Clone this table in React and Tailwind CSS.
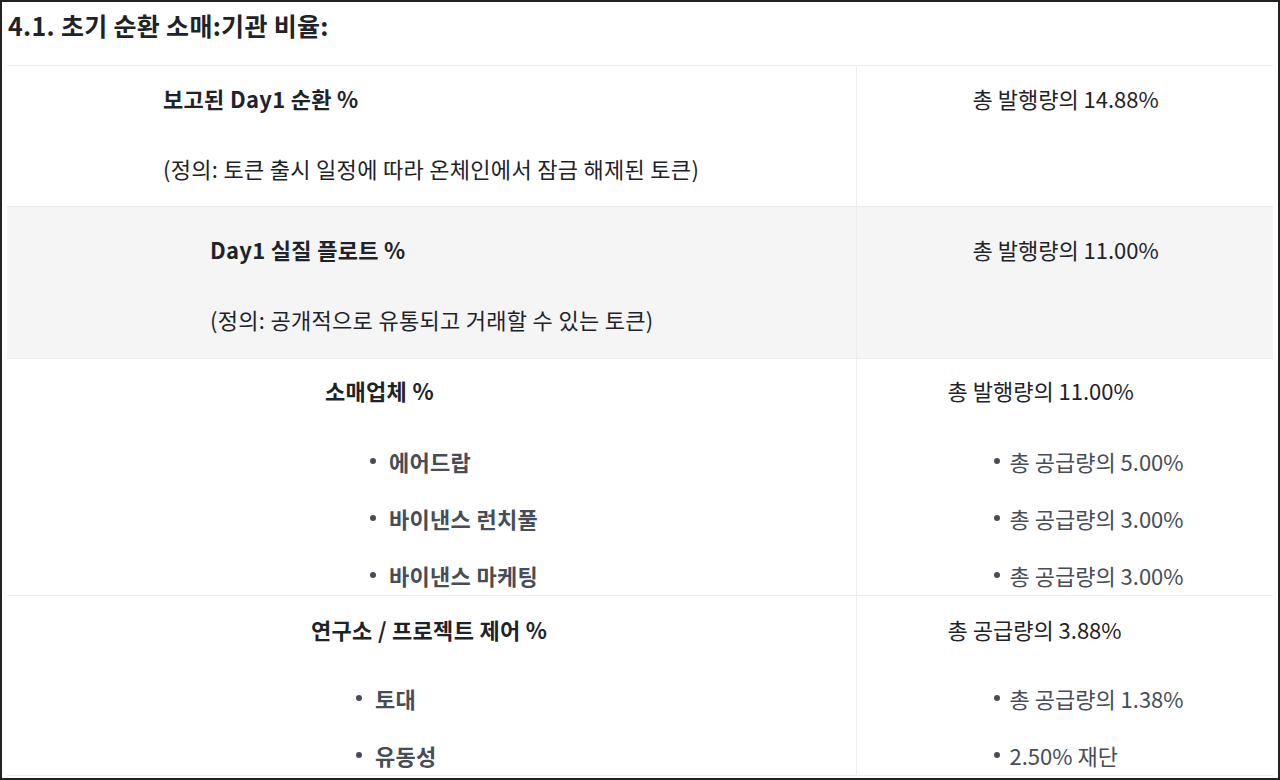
const font = { fontFamily: '"Noto Sans CJK KR", "Noto Sans", sans-serif' };

function Dot() {
  return <span className="inline-block w-[6px] h-[6px] rounded-full bg-[#474d57]" />;
}

function Bullet({ children, bold, gap = "gap-[13px]" }) {
  return (
    <li className={`flex items-center ${gap} h-[28px]`}>
      <Dot />
      <span className={bold ? "font-bold text-[#474d57]" : "text-[#474d57]"}>{children}</span>
    </li>
  );
}

export default function App() {
  return (
    <div
      style={font}
      className="h-[780px] w-[1280px] overflow-hidden border-2 border-[#222] bg-white text-[#1e2329]"
    >
      {/* TITLE */}
      <h2 className="pt-[8px] pl-[6px] text-[25px] leading-[30px] tracking-[0.3px] font-bold text-[#1e2329]">
        4.1. 초기 순환 소매:기관 비율:
      </h2>

      {/* TABLE */}
      <table className="mt-[25px] ml-[5px] w-[1266px] table-fixed border-collapse text-[22px] leading-[28px]">
        <colgroup>
          <col className="w-[849px]" />
          <col className="w-[417px]" />
        </colgroup>
        <tbody>
          <tr className="h-[141px] border-t border-[#eaecef]">
            <td className="align-top border-r border-[#eaecef] pl-[156px] pt-[18px] tracking-[0.3px]">
              <p className="font-bold">보고된 Day1 순환 %</p>
              <p className="mt-[42px]">(정의: 토큰 출시 일정에 따라 온체인에서 잠금 해제된 토큰)</p>
            </td>
            <td className="align-top pl-[116px] pt-[18px]">
              <p>총 발행량의 14.88%</p>
            </td>
          </tr>

          <tr className="h-[152px] bg-[#f5f5f5] border-t border-[#eaecef]">
            <td className="align-top border-r border-[#eaecef] pl-[203px] pt-[28px] tracking-[0.3px]">
              <p className="font-bold">Day1 실질 플로트 %</p>
              <p className="mt-[42px]">(정의: 공개적으로 유통되고 거래할 수 있는 토큰)</p>
            </td>
            <td className="align-top pl-[116px] pt-[28px]">
              <p>총 발행량의 11.00%</p>
            </td>
          </tr>

          <tr className="h-[237px] border-t border-[#eaecef]">
            <td className="align-top border-r border-[#eaecef] pl-[318px] pt-[17px] tracking-[0.3px]">
              <p className="font-bold">소매업체 %</p>
              <ul className="mt-[43px] pl-[45px] space-y-[29px]">
                <Bullet bold>에어드랍</Bullet>
                <Bullet bold>바이낸스 런치풀</Bullet>
                <Bullet bold>바이낸스 마케팅</Bullet>
              </ul>
            </td>
            <td className="align-top pl-[91px] pt-[17px]">
              <p>총 발행량의 11.00%</p>
              <ul className="mt-[43px] pl-[46px] space-y-[29px]">
                <Bullet gap="gap-[10px]">총 공급량의 5.00%</Bullet>
                <Bullet gap="gap-[10px]">총 공급량의 3.00%</Bullet>
                <Bullet gap="gap-[10px]">총 공급량의 3.00%</Bullet>
              </ul>
            </td>
          </tr>

          <tr className="h-[180px] border-t border-b border-[#eaecef]">
            <td className="align-top border-r border-[#eaecef] pl-[304px] pt-[19px] tracking-[0.3px]">
              <p className="font-bold">연구소 / 프로젝트 제어 %</p>
              <ul className="mt-[41px] pl-[45px] space-y-[29px]">
                <Bullet bold>토대</Bullet>
                <Bullet bold>유동성</Bullet>
              </ul>
            </td>
            <td className="align-top pl-[91px] pt-[19px]">
              <p>총 공급량의 3.88%</p>
              <ul className="mt-[41px] pl-[46px] space-y-[29px]">
                <Bullet gap="gap-[10px]">총 공급량의 1.38%</Bullet>
                <Bullet gap="gap-[10px]">2.50% 재단</Bullet>
              </ul>
            </td>
          </tr>
        </tbody>
      </table>
    </div>
  );
}
